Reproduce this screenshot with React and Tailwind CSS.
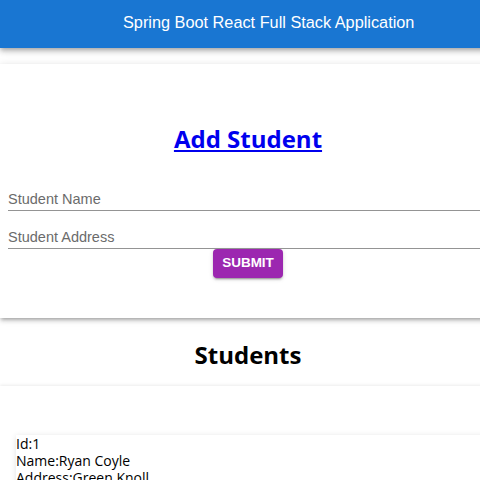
import React, { useState } from "react";

const students = [{ id: 1, name: "Ryan Coyle", address: "Green Knoll" }];

const Field = ({ label, value, setValue }) => {
  return (
    <div className="relative h-[30px] mt-[8px] border-b border-[#949494]">
      <input
        className="absolute inset-0 w-full bg-transparent outline-none pt-[8px] text-[14.5px] font-['Liberation_Sans',sans-serif]"
        value={value}
        placeholder={label}
        onChange={(event) => setValue(event.target.value)}
      />
    </div>
  );
};

export default function App() {
  //state
  const [name, setName] = useState("");
  const [address, setAddress] = useState("");

  return (
    <div className="h-[480px] w-[480px] overflow-hidden bg-white">
      <div className="w-[496px]">
        <header className="h-[48px] bg-[#1976d2] flex items-center pl-[123px] pb-[4px] shadow-[0_2px_4px_-1px_rgba(0,0,0,0.2),0_4px_5px_0_rgba(0,0,0,0.14),0_1px_10px_0_rgba(0,0,0,0.12)] relative">
          <span className="text-white text-[16.3px] font-['Liberation_Sans',sans-serif]">
            Spring Boot React Full Stack Application
          </span>
        </header>

        <div className="mt-[16px] h-[254px] pt-[58px] px-[8px] bg-white shadow-[0_3px_3px_-2px_rgba(0,0,0,0.2),0_3px_4px_0_rgba(0,0,0,0.14),0_1px_8px_0_rgba(0,0,0,0.12)]">
          <h1 className="text-center text-[24px] leading-[33px] font-bold font-['Open_Sans',sans-serif]">
            <a href="#" className="text-[#0000ee] underline">Add Student</a>
          </h1>
          <form className="mt-[26px] [&_input::placeholder]:text-[#6b6b6b]" onSubmit={(event) => event.preventDefault()}>
            <Field label="Student Name" value={name} setValue={setName} />
            <Field label="Student Address" value={address} setValue={setAddress} />
            <div className="flex justify-center">
              <button
                type="submit"
                className="w-[70px] h-[29px] rounded bg-[#9c27b0] text-white text-[13.5px] font-bold font-['Liberation_Sans',sans-serif] shadow-[0_3px_1px_-2px_rgba(0,0,0,0.2),0_2px_2px_0_rgba(0,0,0,0.14),0_1px_5px_0_rgba(0,0,0,0.12)]"
              >
                SUBMIT
              </button>
            </div>
          </form>
        </div>

        <h1 className="mt-[20px] text-center text-[24px] leading-[33px] font-bold font-['Open_Sans',sans-serif]">
          Students
        </h1>

        <div className="mt-[15px] pt-[49px] pl-[16px] bg-white shadow-[0_-1px_3px_0_rgba(0,0,0,0.08)] h-[120px]">
          {students.map((student) => (
            <div
              key={student.id}
              className="bg-white shadow-[0_1px_6px_0_rgba(0,0,0,0.12)] text-[14px] leading-[17px] text-black font-['Open_Sans',sans-serif]"
            >
              Id:{student.id}
              <br />
              Name:{student.name}
              <br />
              Address:{student.address}
            </div>
          ))}
        </div>
      </div>
    </div>
  );
}
